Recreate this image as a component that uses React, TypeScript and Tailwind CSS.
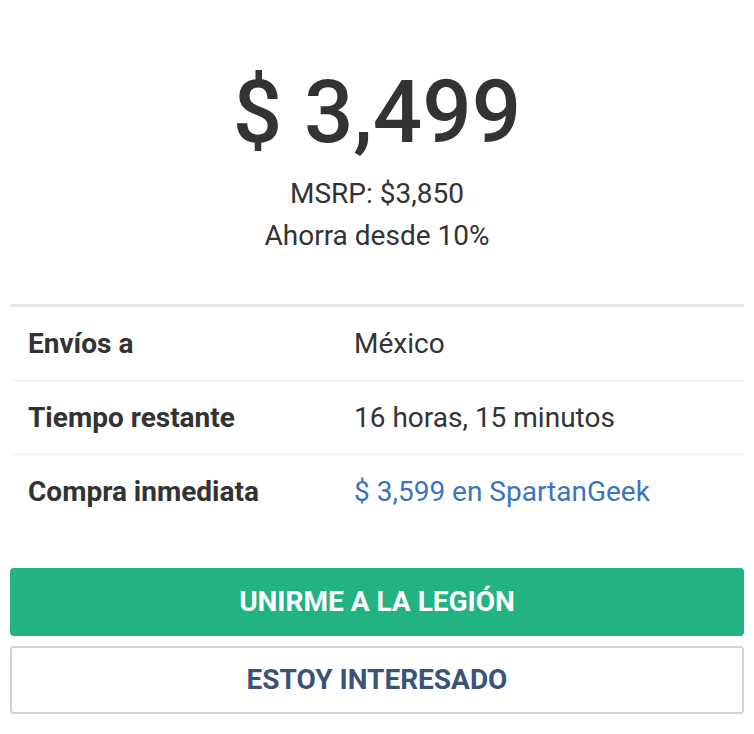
import React from "react";

const rows = [
  { label: "Envíos a", value: "México" },
  { label: "Tiempo restante", value: "16 horas, 15 minutos" },
  { label: "Compra inmediata", value: "$ 3,599 en SpartanGeek", link: true },
];

export default function App() {
  return (
    <div className="w-[754px] h-[734px] bg-white px-[10px] text-[#333] font-['Roboto',sans-serif]">
      {/* precio */}
      <div className="flex flex-col items-center pt-[57px] pb-[47px]">
        <div className="text-[87px] leading-[110px] font-medium">$ 3,499</div>
        <div className="mt-[6px] text-[28px] leading-[42px] text-center">
          <div>MSRP: $3,850</div>
          <div>Ahorra desde 10%</div>
        </div>
      </div>

      <div className="border-t-[3px] border-[#e6e6e6]">
        {rows.map((r, i) => (
          <div
            key={r.label}
            className={
              "flex items-center h-[74px] px-[18px] text-[28px] " +
              (i < rows.length - 1 ? "border-b border-[#ececec]" : "")
            }
          >
            <div className="w-[326px] font-bold">{r.label}</div>
            <div className={r.link ? "text-[#3a73c0]" : ""}>{r.value}</div>
          </div>
        ))}
      </div>

      <div className="mt-[39px] flex flex-col gap-[10px]">
        <button className="h-[68px] w-full rounded-[4px] bg-[#22b383] text-white text-[28px] font-bold">
          UNIRME A LA LEGIÓN
        </button>
        <button className="h-[68px] w-full rounded-[4px] border-2 border-[#d3d3d3] bg-white text-[#3b5378] text-[28px] font-bold">
          ESTOY INTERESADO
        </button>
      </div>
    </div>
  );
}
